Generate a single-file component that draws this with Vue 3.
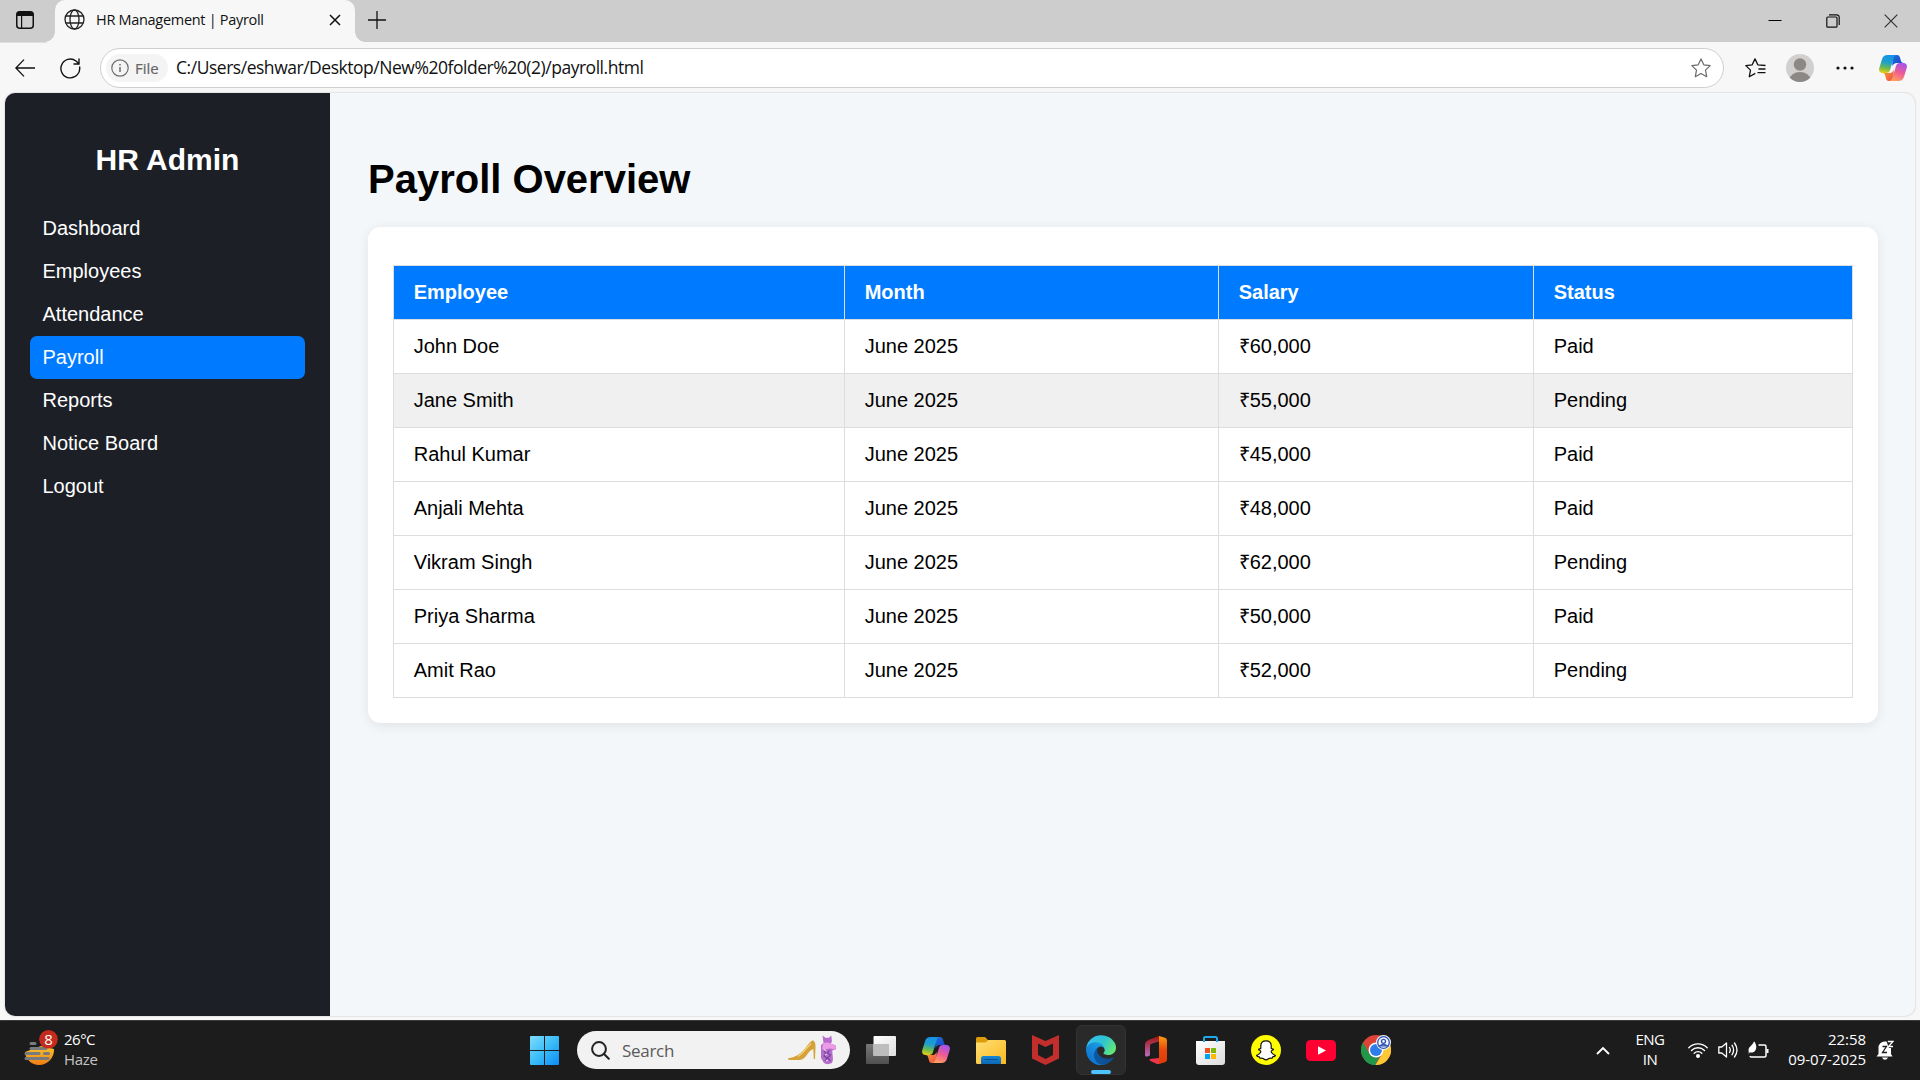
<script setup>
const nav = ['Dashboard', 'Employees', 'Attendance', 'Payroll', 'Reports', 'Notice Board', 'Logout']
const columns = ['Employee', 'Month', 'Salary', 'Status']
const rows = [
  ['John Doe', 'June 2025', '₹60,000', 'Paid'],
  ['Jane Smith', 'June 2025', '₹55,000', 'Pending'],
  ['Rahul Kumar', 'June 2025', '₹45,000', 'Paid'],
  ['Anjali Mehta', 'June 2025', '₹48,000', 'Paid'],
  ['Vikram Singh', 'June 2025', '₹62,000', 'Pending'],
  ['Priya Sharma', 'June 2025', '₹50,000', 'Paid'],
  ['Amit Rao', 'June 2025', '₹52,000', 'Pending'],
]
</script>

<template>
  <div class="screen">
    <svg class="defs" width="0" height="0">
      <defs>
        <linearGradient id="cpBlue" x1="0.4" y1="0" x2="0.2" y2="1">
          <stop offset="0" stop-color="#1593ea" /><stop offset="0.4" stop-color="#1fa0c8" />
          <stop offset="0.7" stop-color="#6dbb4e" /><stop offset="1" stop-color="#f4cf12" />
        </linearGradient>
        <linearGradient id="cpPink" x1="0.7" y1="0" x2="0.3" y2="1">
          <stop offset="0" stop-color="#a553ec" /><stop offset="0.5" stop-color="#ee5b96" />
          <stop offset="1" stop-color="#ffa05c" />
        </linearGradient>
        <linearGradient id="cpTop" x1="0" y1="0" x2="1" y2="1">
          <stop offset="0" stop-color="#1a73d8" /><stop offset="1" stop-color="#1c3fc8" />
        </linearGradient>
        <linearGradient id="cpBot" x1="0" y1="0" x2="1" y2="1">
          <stop offset="0" stop-color="#fba42c" /><stop offset="1" stop-color="#ee4a4a" />
        </linearGradient>
        <symbol id="copilot" viewBox="0 0 28 26">
          <path d="M13 0h5.200c1.500 0 2.300 1 2.700 2.300l1 3.400c.4 1.300 1.100 2.200 2.600 2.200h-6.500c-2.500 0-4 1.500-4.600 3.400z" fill="url(#cpTop)" />
          <path d="M15 26H9.800c-1.500 0-2.300-1-2.700-2.300l-1-3.400C5.700 19 5 18.100 3.500 18.100H10c2.500 0 4-1.500 4.600-3.400z" fill="url(#cpBot)" />
          <path d="M8.600 0H18c-1.800 0-2.800 1.200-3.400 3.200l-3.500 11.600c-.7 2.200-1.900 3.300-4 3.300H3.500c-2.700 0-4-2.200-3.200-5.200L3.100 4C3.900 1.300 5.700 0 8.600 0z" fill="url(#cpBlue)" />
          <path d="M19.400 26H10c1.800 0 2.800-1.200 3.400-3.200l3.500-11.600c.7-2.200 1.900-3.300 4-3.300h3.600c2.700 0 4 2.200 3.200 5.200L24.900 22c-.8 2.700-2.600 4-5.500 4z" fill="url(#cpPink)" />
        </symbol>
      </defs>
    </svg>

    <header class="tabs">
      <div class="workspace">
        <svg width="18" height="18" viewBox="0 0 18 18"><rect x=".75" y=".75" width="16.500" height="16.500" rx="3" fill="none" stroke="#111" stroke-width="1.500" /><path d="M1 3.500a3 3 0 0 1 3-3h10a3 3 0 0 1 3 3V5H1zM5 5h1.200v12H5z" fill="#111" /></svg>
      </div>
      <div class="tab">
        <svg class="globe" width="21" height="21" viewBox="0 0 21 21" fill="none" stroke="#222" stroke-width="1.300"><circle cx="10.500" cy="10.500" r="9.500" /><ellipse cx="10.500" cy="10.500" rx="4.500" ry="9.500" /><path d="M1.700 7h17.600M1.700 14h17.600" /></svg>
        <span class="tab-title">HR Management | Payroll</span>
        <svg class="tab-close" width="12" height="12" viewBox="0 0 12 12" stroke="#111" stroke-width="1.500"><path d="M1 1l10 10M11 1L1 11" /></svg>
      </div>
      <svg class="plus" width="18" height="18" viewBox="0 0 18 18" stroke="#111" stroke-width="1.300"><path d="M9 0v18M0 9h18" /></svg>
      <div class="winctl">
        <svg width="14" height="14" viewBox="0 0 14 14" stroke="#000" stroke-width="1"><path d="M.5 6.500h13" /></svg>
        <svg width="14" height="14" viewBox="0 0 14 14" fill="none" stroke="#111" stroke-width="1.200"><rect x=".8" y="3" width="10.200" height="10.200" rx="1" /><path d="M3 .8h7.700a2.500 2.500 0 0 1 2.500 2.500V11" /></svg>
        <svg width="14" height="14" viewBox="0 0 14 14" stroke="#333" stroke-width="1.200"><path d="M.7.700l12.600 12.600M13.300.7L.7 13.300" /></svg>
      </div>
    </header>

    <div class="toolbar">
      <svg class="back" width="20" height="18" viewBox="0 0 20 18" fill="none" stroke="#111" stroke-width="1.300"><path d="M9 .6L.9 9 9 17.400M1 9h19" /></svg>
      <svg class="reload" width="21" height="21" viewBox="0 0 21 21" fill="none" stroke="#111" stroke-width="1.400"><path d="M19.500 8.500A9.400 9.400 0 1 1 16 3l3 2.800M19 .5V6h-5.500" /></svg>
      <div class="address">
        <div class="file">
          <svg width="18" height="18" viewBox="0 0 18 18" fill="none" stroke="#6e6e6e" stroke-width="1.200"><circle cx="9" cy="9" r="8.200" /><path d="M9 8v5M9 5v1.500" stroke-width="1.500" /></svg>
          <span>File</span>
        </div>
        <span class="url">C:/Users/eshwar/Desktop/New%20folder%20(2)/payroll.html</span>
        <svg class="star" width="20" height="20" viewBox="0 0 20 20" fill="none" stroke="#6a6a6a" stroke-width="1.200" stroke-linejoin="round"><path d="M10 .9l2.800 5.900 6.400.8-4.700 4.500 1.200 6.600L10 15.500l-5.700 3.200 1.200-6.600L.8 7.600l6.400-.8z" /></svg>
      </div>
      <svg class="favs" width="21" height="20" viewBox="0 0 21 20" fill="none" stroke="#111" stroke-width="1.300" stroke-linejoin="round"><path d="M10.300 15.400l-6 3.300 1.200-6.600L.8 7.600l6.400-.8L10 .9l2.800 5.900 7.700.7M13.500 11H20.500M12.500 14.700h8" /></svg>
      <svg class="avatar" width="28" height="28" viewBox="0 0 28 28"><clipPath id="av"><circle cx="14" cy="14" r="14" /></clipPath><g clip-path="url(#av)"><rect width="28" height="28" fill="#d2d0ce" /><circle cx="14" cy="10.500" r="6.200" fill="#8b8886" /><ellipse cx="14" cy="26" rx="10.500" ry="8" fill="#8b8886" /></g></svg>
      <svg class="dots" width="18" height="4" viewBox="0 0 18 4" fill="#111"><circle cx="2" cy="2" r="1.600" /><circle cx="9" cy="2" r="1.600" /><circle cx="16" cy="2" r="1.600" /></svg>
      <svg class="cp" width="28" height="26"><use href="#copilot" /></svg>
    </div>

    <div class="viewport">
      <div class="page">
        <aside class="sidebar">
          <h2>HR Admin</h2>
          <a v-for="n in nav" :key="n" :class="{ active: n === 'Payroll' }">{{ n }}</a>
        </aside>
        <main class="main">
          <h1>Payroll Overview</h1>
          <section class="card">
            <table>
              <colgroup><col class="c1" /><col class="c2" /><col class="c3" /><col class="c4" /></colgroup>
              <thead><tr><th v-for="c in columns" :key="c">{{ c }}</th></tr></thead>
              <tbody>
                <tr v-for="(r, i) in rows" :key="r[0]" :class="{ hovered: i === 1 }"><td v-for="(v, j) in r" :key="j">{{ v }}</td></tr>
              </tbody>
            </table>
          </section>
        </main>
      </div>
    </div>

    <footer class="taskbar">
      <div class="weather">
        <svg width="36" height="38" viewBox="0 0 36 38">
          <defs><linearGradient id="sun" x1="0" y1="0" x2="0" y2="1"><stop offset="0" stop-color="#f9c431" /><stop offset="1" stop-color="#ef7d14" /></linearGradient></defs>
          <path d="M1 22L17 16l13 3a15 15 0 0 1-15 16A14 14 0 0 1 1 22z" fill="url(#sun)" />
          <g stroke="#777b7c" stroke-width="3" stroke-linecap="round"><path d="M7 13.500h4M7 18.500h15M2 23.500h13M20.500 23.500h4M2 28.500h22" /></g>
          <circle cx="24.500" cy="9.300" r="9.300" fill="#c42b1c" />
          <text x="24.500" y="14.800" text-anchor="middle" fill="#fff" font-size="15" font-family="'Open Sans', sans-serif">8</text>
        </svg>
        <div class="weather-text"><span>26°C</span><span class="haze">Haze</span></div>
      </div>

      <div class="apps">
        <svg class="start" width="29" height="29" viewBox="0 0 29 29">
          <defs><linearGradient id="win" x1="0" y1="0" x2="1" y2="1"><stop offset="0" stop-color="#7fdcfb" /><stop offset=".5" stop-color="#3bbdf8" /><stop offset="1" stop-color="#0a8df5" /></linearGradient></defs>
          <path d="M1 0h13v14H0V1a1 1 0 0 1 1-1zM15 0h13a1 1 0 0 1 1 1v13H15zM0 15h14v14H1a1 1 0 0 1-1-1zM15 15h14v13a1 1 0 0 1-1 1H15z" fill="url(#win)" />
        </svg>
        <div class="search">
          <svg width="19" height="19" viewBox="0 0 19 19" fill="none" stroke="#222" stroke-width="2"><circle cx="8" cy="8" r="6.900" /><path d="M12.800 12.800l5 5" stroke-linecap="round" /></svg>
          <span>Search</span>
          <svg class="fashion" width="50" height="30" viewBox="0 0 50 30">
            <path d="M1.200 23.300C8 22.500 13.500 19 18 13.500c3-4 5.500-7.500 8-8.300 2 1.300 2.600 3.500 2.500 6.500L28 24h-1.200L26.300 14c-2 .7-4 2.500-5.800 5-2.500 3.800-4.500 5.800-8 6H3c-1.500 0-2.500-.7-1.800-1.700z" fill="#d5a23a" />
            <path d="M11 21.500c4-2.500 8-8 13-13" stroke="#efcf79" stroke-width="1.400" fill="none" />
            <path d="M35.500.500l3 2.200h3.500L44.300.500l.6 5.500-1 3 4.500 1 .8 4-4 1.500.8 9-1 3.500c-3 1.500-6 1.500-8 0L34 23V10l2.500-2z" fill="#b76dcd" />
            <path d="M36 8.500c2-1.500 5-1.500 8 0l5.200 2.500-1 3.500-4.700-1-8.500 1z" fill="#ec9be6" />
            <path d="M37 16l2 2-2 3 3 2-2 3M42.500 15l-2 3 3 2-3 3 3 3" stroke="#70479c" stroke-width="1.200" fill="none" />
            <path d="M37 14l2 2M38 20l2-1M39 26l2-1" stroke="#f0c4f2" stroke-width="1.200" />
          </svg>
        </div>
        <div class="app">
          <svg width="30" height="28" viewBox="0 0 30 28"><defs><linearGradient id="tv1" x1="0" y1="0" x2="1" y2="1"><stop offset="0" stop-color="#fff" /><stop offset="1" stop-color="#dedede" /></linearGradient><linearGradient id="tv2" x1="0" y1="0" x2="0" y2="1"><stop offset="0" stop-color="#777" /><stop offset="1" stop-color="#505050" /></linearGradient></defs><rect y="8" width="23" height="20" rx="1" fill="url(#tv2)" /><rect x="7.500" width="22.500" height="20" rx="1" fill="url(#tv1)" /><path d="M7.500 8H23v12H7.500z" fill="#bdbdbd" /></svg>
        </div>
        <div class="app"><svg width="28" height="26"><use href="#copilot" /></svg></div>
        <div class="app">
          <svg class="down" width="30" height="27" viewBox="0 0 30 27"><defs><linearGradient id="fol" x1="0" y1="0" x2="1" y2="1"><stop offset="0" stop-color="#ffdf76" /><stop offset="1" stop-color="#fbb91e" /></linearGradient><linearGradient id="folb" x1="0" y1="0" x2="0" y2="1"><stop offset="0" stop-color="#1387d8" /><stop offset="1" stop-color="#0d68b5" /></linearGradient></defs><path d="M0 1.500A1.500 1.500 0 0 1 1.500 0H9l3 3H28v8H0z" fill="#dd9c0a" /><path d="M0 5.500h9.500l3-2.500H28.500A1.500 1.500 0 0 1 30 4.500V27H1.500A1.500 1.500 0 0 1 0 25.500z" fill="url(#fol)" /><path d="M5 27v-5.500a2.500 2.500 0 0 1 2.500-2.500h15a2.500 2.500 0 0 1 2.500 2.500V27z" fill="url(#folb)" /><path d="M8.500 22.500h13" stroke="#0b4f8d" stroke-width="1" /></svg>
        </div>
        <div class="app left"><svg width="27" height="30" viewBox="0 0 27 30"><path fill-rule="evenodd" d="M0 0l13.500 6L27 0v23.500L13.500 30 0 23.500zM6 8.500v11.500l7.500 4 7.500-4V8.500l-7.500 3.600z" fill="#c12e2c" /></svg></div>
        <div class="app open">
          <svg width="30" height="30" viewBox="4.600 4.900 256 254">
            <defs>
              <linearGradient id="e1" x1="0" y1=".7" x2="1" y2=".7"><stop offset="0" stop-color="#0c59a4" /><stop offset="1" stop-color="#114a8b" /></linearGradient>
              <linearGradient id="e2" x1=".8" y1=".2" x2=".2" y2="1"><stop offset="0" stop-color="#1b9de2" /><stop offset=".5" stop-color="#1384d9" /><stop offset="1" stop-color="#0b70cb" /></linearGradient>
              <linearGradient id="e3" x1="0" y1=".3" x2="1" y2=".7"><stop offset="0" stop-color="#35c1f1" /><stop offset=".5" stop-color="#2fc3d2" /><stop offset="1" stop-color="#66eb6e" /></linearGradient>
            </defs>
            <path fill="url(#e1)" d="M235.680 195.460a93.730 93.730 0 0 1-10.540 4.710 101.870 101.870 0 0 1-35.900 6.460c-47.320 0-88.540-32.550-88.540-74.320A31.480 31.480 0 0 1 117.130 105c-42.800 1.800-53.800 46.400-53.800 72.530 0 73.880 68.090 81.370 82.760 81.370 7.910 0 19.840-2.300 27-4.560l1.310-.44A128.340 128.340 0 0 0 241 201.100a4 4 0 0 0-5.320-5.640Z" />
            <path fill="url(#e2)" d="M110.340 246.340A79.200 79.200 0 0 1 87.600 225 80.720 80.720 0 0 1 117.130 105c3.120-1.470 8.450-4.130 15.540-4a32.350 32.350 0 0 1 25.690 13 31.880 31.880 0 0 1 6.360 18.660c0-.21 24.460-79.600-80-79.600-43.900 0-80 41.660-80 78.210A130.150 130.150 0 0 0 16.890 187a128 128 0 0 0 156.380 67.110 75.550 75.550 0 0 1-62.780-8Z" />
            <path fill="url(#e3)" d="M156.940 153.780c-.81 1-3.300 2.500-3.300 5.660 0 2.610 1.700 5.120 4.720 7.230 14.380 10 41.490 8.680 41.560 8.680A59.560 59.560 0 0 0 230.190 167a61.380 61.380 0 0 0 30.430-52.880c.26-22.410-8-37.310-11.340-43.910C228.090 28.760 182.350 5 132.620 5A128 128 0 0 0 4.630 131.200C5.110 94.650 41.430 65.130 84.630 65.130c3.500 0 23.460.34 42 10.070 16.340 8.580 24.900 18.940 30.850 29.210 6.180 10.670 7.280 24.150 7.280 29.520S162 147.400 156.940 153.780Z" />
          </svg>
        </div>
        <div class="app left">
          <svg width="22" height="28" viewBox="0 0 22 28"><defs><linearGradient id="of1" x1="0" y1="0" x2="0" y2="1"><stop offset="0" stop-color="#a5120c" /><stop offset="1" stop-color="#b76fc0" /></linearGradient><linearGradient id="of2" x1="0" y1="0" x2="0" y2="1"><stop offset="0" stop-color="#ff9c0d" /><stop offset=".5" stop-color="#e8480d" /><stop offset="1" stop-color="#dc3c06" /></linearGradient></defs><path d="M14 0L4 3.800C1.500 4.800 0 6.500 0 9v10c0 1.500 1.500 2 3 1.300l2-1V10c0-1.500.5-2 2-2.500l7-2z" fill="url(#of1)" /><path d="M14 0l6 1.800q2 .6 2 2.700v19q0 2-2 2.700L14 28z" fill="url(#of2)" /><path d="M5 23l9-1v6H12L5.500 25q-2-1-.5-2z" fill="#f0354a" /></svg>
        </div>
        <div class="app left">
          <svg width="29" height="29" viewBox="0 0 29 29"><defs><linearGradient id="st" x1="0" y1="0" x2="1" y2="1"><stop offset="0" stop-color="#fff" /><stop offset="1" stop-color="#dcdcdc" /></linearGradient></defs><path d="M0 5h29v21a3 3 0 0 1-3 3H3a3 3 0 0 1-3-3z" fill="url(#st)" /><path d="M8 6V2.200A1.200 1.200 0 0 1 9.200 1h10.600A1.200 1.200 0 0 1 21 2.200V6" fill="none" stroke="#20a7e8" stroke-width="2" /><path d="M9 12h5v5H9z" fill="#f25022" /><path d="M15 12h5v5h-5z" fill="#7fba00" /><path d="M9 18h5v5H9z" fill="#00a4ef" /><path d="M15 18h5v5h-5z" fill="#ffb900" /></svg>
        </div>
        <div class="app">
          <svg width="30" height="30" viewBox="0 0 30 30"><circle cx="15" cy="15" r="15" fill="#fffc00" /><path d="M15 5.800c-3.500 0-5.200 2.400-5.200 5v2.800c-.7.500-1.900-.2-2.200.7-.2.900 1.900 1 2.200 2 .2 1.500-2.300 3.500-4.100 4-.5.900 1.600 1.400 2.700 1.600l.6 1.400c1-.1 2.300-.3 3.200.3 1 .7 1.700 1.300 2.800 1.300s1.800-.6 2.800-1.300c.9-.6 2.200-.4 3.200-.3l.6-1.400c1.100-.2 3.200-.7 2.700-1.600-1.800-.5-4.300-2.500-4.100-4 .3-1 2.400-1.100 2.200-2-.3-.9-1.500-.2-2.200-.7v-2.800c0-2.600-1.700-5-5.200-5z" fill="#fff" stroke="#111" stroke-width="1.200" stroke-linejoin="round" /></svg>
        </div>
        <div class="app"><svg width="30" height="21" viewBox="0 0 30 21"><rect width="30" height="21" rx="4.500" fill="#ff0033" /><path d="M12 6.200l8 4.300-8 4.300z" fill="#fff" /></svg></div>
        <div class="app">
          <svg width="30" height="30" viewBox="0 0 30 30"><circle cx="15" cy="15" r="15" fill="#dd4437" /><path d="M2 7.500l6.500 11.200c1.300 2.300 3.700 3.800 6.500 3.800L15 30A15 15 0 0 1 2 7.500z" fill="#22974a" /><path d="M8.500 18.500c2 4 7 5 10.500 3l-5 8.500C9 30 5 27 3 24z" fill="#22974a" /><path d="M15 7.500h13a15 15 0 0 1-13.500 22.500l6.500-11z" fill="#fcc934" /><circle cx="15" cy="15" r="7.500" fill="#fff" /><circle cx="15" cy="15" r="6" fill="#2f7de9" /><circle cx="22.500" cy="7.500" r="7.500" fill="#f2f5fd" /><g fill="none" stroke="#3155b4" stroke-width="1.300"><circle cx="22.500" cy="7.500" r="5.800" /><circle cx="22.500" cy="6.300" r="2" /><path d="M18.700 10.800q3.800-3 7.600 0z" /></g></svg>
        </div>
      </div>

      <div class="tray">
        <svg class="chev" width="14" height="9" viewBox="0 0 14 9" fill="none" stroke="#fff" stroke-width="1.900"><path d="M1 8l6-6 6 6" /></svg>
        <div class="lang"><span>ENG</span><span>IN</span></div>
        <svg class="wifi" width="20" height="16" viewBox="0 0 20 16" fill="none" stroke="#fff" stroke-width="1.400" stroke-linecap="round"><path d="M.8 5.700a13 13 0 0 1 18.400 0M3.500 8.500a9.200 9.200 0 0 1 13 0M6.200 11.200a5.400 5.400 0 0 1 7.600 0" /><circle cx="10" cy="14" r="1.300" fill="#fff" /></svg>
        <svg class="vol" width="20" height="18" viewBox="0 0 20 18" fill="none" stroke="#fff" stroke-width="1.300" stroke-linejoin="round" stroke-linecap="round"><path d="M.8 6v6h3L8.500 16V2L3.800 6zM11.500 6.500q1.600 2.500 0 5M14 4.200q3.200 4.800 0 9.600M16.500 2q5 7 0 14" /></svg>
        <svg class="bat" width="21" height="18" viewBox="0 0 21 18" fill="none" stroke="#fff" stroke-width="1.500"><path d="M10.500 4h6A1.500 1.500 0 0 1 18 5.500v9a1.500 1.500 0 0 1-1.500 1.500H3.500A1.500 1.500 0 0 1 2 15" /><path d="M19.500 8v4" stroke-width="2" /><path d="M.8 11C-.8 6 4.500 5 6 .3c3.300 3.500 3.200 10-1.500 11.200-1.200.2-2 .1-2.700-.2L.6 13z" fill="#fff" stroke="none" /></svg>
        <div class="clock"><span>22:58</span><span>09-07-2025</span></div>
        <svg class="bell" width="18" height="20" viewBox="0 0 18 20"><path d="M2.500 14V8a6 6 0 0 1 6-6.500h2L13 8h2v6l1.500 2.500H.5zM6 17.500h6q-1 2.300-3 2.300t-3-2.300z" fill="#fff" /><path d="M6.500 6.500h4L6.500 12.500h4.500" fill="none" stroke="#1c1c1c" stroke-width="1.300" /><path d="M11.800 1.500H17L12.500 6.500H17" fill="none" stroke="#fff" stroke-width="1.300" /></svg>
      </div>
    </footer>
  </div>
</template>

<style>
body { margin: 0; overflow: hidden; }
</style>

<style scoped>
* { box-sizing: border-box; }
.screen { width: 1920px; height: 1080px; display: flex; flex-direction: column; background: #f7f7f7; font-family: "Open Sans", "Noto Sans", sans-serif; }
.defs { position: absolute; }
svg { display: block; flex: none; }
span { white-space: nowrap; }

.tabs { height: 42px; display: flex; background: #cdcdcd; flex: none; }
.workspace { width: 55px; height: 42px; padding: 11px 0 0 16px; border-radius: 0 0 10px 0; box-shadow: 0 1px 0 #dedede; }
.tab { width: 300px; height: 42px; background: #f7f7f7; border-radius: 10px 10px 0 0; display: flex; align-items: center; padding: 0 14px 3px 9px; position: relative; }
.tab::before, .tab::after { content: ""; position: absolute; bottom: 0; width: 10px; height: 10px; }
.tab::before { left: -10px; background: radial-gradient(circle at 0 0, transparent 9.500px, #f7f7f7 10px); }
.tab::after { right: -10px; background: radial-gradient(circle at 100% 0, transparent 9.500px, #f7f7f7 10px); }
.tab-title { margin-left: 11px; font-size: 14.500px; letter-spacing: -0.300px; color: #111; flex: 1; }
.plus { margin: 11px 0 0 13px; }
.winctl { margin-left: auto; display: flex; gap: 44px; padding: 14px 22px 0 0; }

.toolbar { height: 51px; flex: none; display: flex; align-items: center; padding: 1px 13px 0 15px; }
.reload { margin-left: 25px; }
.address { margin-left: 19px; width: 1625px; height: 40px; border: 1px solid #cfcfcf; border-radius: 20px; background: #fff; display: flex; align-items: center; padding: 0 12px 0 5px; }
.file { width: 62px; height: 28px; border-radius: 14px; background: #f4f4f4; display: flex; align-items: center; padding-left: 5px; gap: 6px; font-size: 15px; letter-spacing: 0; color: #666; -webkit-text-stroke: .2px #666; }
.url { margin: 0 0 2px 8px; font-size: 17.500px; letter-spacing: -0.470px; color: #111; flex: 1; }
.favs { margin-left: 21px; }
.avatar { margin-left: 20px; }
.dots { margin-left: 22px; }
.cp { margin-left: 25px; }

.viewport { height: 927px; flex: none; padding: 0 5px 4px; }
.page { height: 923px; display: flex; border-radius: 10px; overflow: hidden; background: #f3f7fa; font-family: "Liberation Sans", Arial, sans-serif; font-size: 20px; box-shadow: 0 0 2px rgba(0,0,0,.25); }
.sidebar { width: 325px; flex: none; background: #1d1f27; padding: 47px 25px 0; color: #fff; display: flex; flex-direction: column; }
.sidebar h2 { margin: 0 0 28px; text-align: center; font-size: 30px; line-height: 39px; height: 39px; }
.sidebar a { height: 43px; line-height: 43px; padding-left: 12.500px; border-radius: 7px; }
.sidebar .active { background: #007bff; }
.main { flex: 1; min-width: 0; padding: 61px 37px 0 38px; }
h1 { margin: 0; font-size: 40px; line-height: 50px; height: 73px; color: #000; }
.card { height: 496px; background: #fff; border-radius: 12.500px; padding: 38px 25px 25px; box-shadow: 0 2.500px 12px rgba(0,0,0,.08); }
table { width: 1459px; border-collapse: collapse; table-layout: fixed; }
.c1 { width: 451px; } .c2 { width: 374px; } .c3 { width: 315px; } .c4 { width: 319px; }
tr { height: 54px; }
th, td { border: 1px solid #ddd; padding: 0 19.700px; text-align: left; line-height: 23px; }
th { background: #007bff; color: #fff; }
.hovered { background: #f0f0f0; }

.taskbar { height: 60px; flex: none; background: #1c1c1c; border-top: 1px solid #3b3b3b; display: flex; align-items: center; color: #fff; padding-bottom: 1px; }
.weather { width: 530px; display: flex; padding: 0 0 2px 24px; align-items: center; }
.weather-text { margin-left: 4px; display: flex; flex-direction: column; font-size: 15px; line-height: 20px; letter-spacing: -0.500px; }
.haze { color: #c4c4c4; letter-spacing: -0.300px; }
.apps { display: flex; align-items: center; }
.search { margin: 0 3.500px 0 18px; width: 273px; height: 38px; border-radius: 19px; background: #f2f2f2; display: flex; align-items: center; padding: 0 13px 0 14px; font-size: 17px; color: #5a5a5a; }
.search span { margin-left: 12px; flex: 1; letter-spacing: -0.300px; }
.app { width: 55px; height: 50px; display: flex; align-items: center; justify-content: center; position: relative; }
.left { padding-right: 1px; }
.down { margin-top: 1px; }
.open::before { content: ""; position: absolute; inset: 0 2.500px; background: #2a2a2a; border: 1px solid #323232; border-radius: 6px; }
.open svg { position: relative; }
.open::after { content: ""; position: absolute; bottom: 1px; left: 17.500px; width: 20px; height: 4px; border-radius: 2px; background: #4cc2ff; }
.tray { margin-left: auto; display: flex; align-items: center; padding-right: 26px; font-size: 15px; line-height: 20px; }
.lang { margin-left: 24px; width: 32px; display: flex; flex-direction: column; align-items: center; letter-spacing: -0.500px; padding-bottom: 2px; }
.wifi { margin-left: 22px; }
.vol { margin-left: 10px; }
.bat { margin-left: 10px; }
.clock { width: 97px; display: flex; flex-direction: column; align-items: flex-end; letter-spacing: -0.050px; padding-bottom: 2px; }
.bell { margin-left: 10px; }
</style>
